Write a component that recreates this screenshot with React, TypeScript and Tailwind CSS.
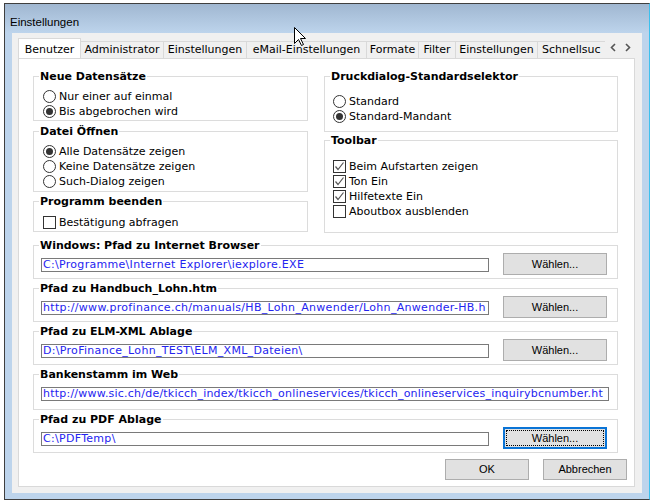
import React from 'react';

// --- kleine Bausteine ---
const Group: React.FC<{ title: string; className: string; children?: React.ReactNode }> = ({ title, className, children }) => (
  <div className={`border border-[#dcdcdc] ${className}`}>
    <div className="-mt-[7px] ml-[5px] w-fit px-px bg-white font-bold leading-[13px]">{title}</div>
    {children}
  </div>
);

const Radio: React.FC<{ checked?: boolean; label: string }> = ({ checked, label }) => (
  <div className="flex items-center h-[15px]">
    <span className="w-[13px] h-[13px] rounded-full border border-[#333] bg-white flex items-center justify-center">
      {checked && <span className="w-[7px] h-[7px] rounded-full bg-[#333]" />}
    </span>
    <span className="ml-[3px] leading-[15px]">{label}</span>
  </div>
);

const Check: React.FC<{ checked?: boolean; label: string }> = ({ checked, label }) => (
  <div className="flex items-center h-[15px]">
    <span className="w-[13px] h-[13px] border border-[#333] bg-white flex items-center justify-center">
      {checked && (
        <svg width="11" height="11" viewBox="0 0 11 11">
          <path d="M1.5 5.5 L4 8.5 L9.5 1.5" fill="none" stroke="#555" strokeWidth="1.2" />
        </svg>
      )}
    </span>
    <span className="ml-[3px] leading-[15px]">{label}</span>
  </div>
);

const Btn: React.FC<{ label: string; className: string }> = ({ label, className }) => (
  <div className={`bg-[#e1e1e1] border border-[#adadad] flex items-center justify-center font-['Liberation_Sans',sans-serif] text-[11px] ${className}`}>
    {label}
  </div>
);

const PathBox: React.FC<{ title: string; value: string; h: string; wide?: boolean; focused?: boolean; className?: string }> = ({ title, value, h, wide, focused, className = '' }) => (
  <Group title={title} className={`${h} ${className}`}>
    <div className="flex items-start">
      <div className={`ml-[7px] mt-[6px] h-[14px] border border-[#7a7a7a] overflow-hidden whitespace-nowrap pl-px leading-[12px] text-[#2424f0] ${wide ? 'w-[568px] tracking-[0.22px]' : 'w-[448px] tracking-[0.3px]'}`}>
        {value}
      </div>
      {!wide && (focused ? (
        <div className="ml-[14px] mt-[1px] w-[104px] h-[22px] bg-[#e1e1e1] border-2 border-[#0a74d6] p-px flex">
          <div className="flex-1 border border-dotted border-black flex items-center justify-center font-['Liberation_Sans',sans-serif] text-[11px]">Wählen...</div>
        </div>
      ) : (
        <Btn label="Wählen..." className="ml-[14px] mt-[1px] w-[104px] h-[22px]" />
      ))}
    </div>
  </Group>
);

const tabs: { label: string; w: string }[] = [
  { label: 'Administrator', w: 'w-[83px]' },
  { label: 'Einstellungen', w: 'w-[83px]' },
  { label: 'eMail-Einstellungen', w: 'w-[120px]' },
  { label: 'Formate', w: 'w-[52px]' },
  { label: 'Filter', w: 'w-[37px]' },
  { label: 'Einstellungen', w: 'w-[82px]' },
];

export default function App() {
  return (
    <div className="relative w-[656px] h-[504px] bg-white font-['DejaVu_Sans',sans-serif] text-[11px] text-black overflow-hidden">
      {/* Fenster */}
      <div className="ml-[4px] mt-[3px] w-[646px] h-[497px] border-l border-t border-b border-[#3f3f3f] border-r border-r-[#3cc0ee] bg-[#bdd4ec] flex flex-col">
        {/* Titelleiste */}
        <div className="h-[29px] bg-linear-to-b from-[#a0b7d1] to-[#bdd4ec] pl-[5px] pt-[11px] leading-[14px] font-['Liberation_Sans',sans-serif] text-[11.5px]">
          Einstellungen
        </div>

        {/* Client */}
        <div className="mx-[7px] w-[630px] h-[460px] bg-[#f0f0f0] pl-[6px] pt-[5px]">
          {/* Reiter */}
          <div className="flex w-[617px] h-[20px] items-end">
            <div className="flex-1 flex items-end h-[20px] overflow-hidden">
              <div className="relative z-10 -mb-px shrink-0 w-[63px] h-[21px] bg-white border border-b-0 border-[#d9d9d9] flex items-center justify-center pt-[2px]">
                Benutzer
              </div>
              {tabs.map((t, i) => (
                <div key={i} className={`shrink-0 ${t.w} h-[17px] bg-[#f0f0f0] border-t border-r border-[#d9d9d9] flex items-center justify-center pt-px whitespace-nowrap`}>
                  {t.label}
                </div>
              ))}
              <div className="shrink-0 w-[67px] h-[17px] bg-[#f0f0f0] border-t border-[#d9d9d9] flex items-center pl-[4px] pt-px whitespace-nowrap">
                Schnellsuc
              </div>
            </div>
            <div className="w-[30px] h-[20px] flex items-center justify-center gap-[9px] pb-[2px]">
              <svg width="6" height="9" viewBox="0 0 6 9"><path d="M5 1 L1.5 4.5 L5 8" fill="none" stroke="#555" strokeWidth="1.6" /></svg>
              <svg width="6" height="9" viewBox="0 0 6 9"><path d="M1 1 L4.5 4.5 L1 8" fill="none" stroke="#555" strokeWidth="1.6" /></svg>
            </div>
          </div>

          {/* Seite */}
          <div className="w-[617px] h-[429px] border border-[#d9d9d9] bg-white pl-[14px] pr-[16px] pt-[17px]">
            <div className="flex gap-[16px]">
              <div className="w-[275px] flex flex-col">
                <Group title="Neue Datensätze" className="h-[45px]">
                  <div className="mt-[6px] ml-[9px]">
                    <Radio label="Nur einer auf einmal" />
                    <Radio checked label="Bis abgebrochen wird" />
                  </div>
                </Group>
                <Group title="Datei Öffnen" className="mt-[10px] h-[61px]">
                  <div className="mt-[6px] ml-[9px]">
                    <Radio checked label="Alle Datensätze zeigen" />
                    <Radio label="Keine Datensätze zeigen" />
                    <Radio label="Such-Dialog zeigen" />
                  </div>
                </Group>
                <Group title="Programm beenden" className="mt-[9px] h-[31px]">
                  <div className="mt-[7px] ml-[9px]">
                    <Check label="Bestätigung abfragen" />
                  </div>
                </Group>
              </div>
              <div className="w-[294px] flex flex-col">
                <Group title="Druckdialog-Standardselektor" className="h-[56px]">
                  <div className="mt-[11px] ml-[8px]">
                    <Radio label="Standard" />
                    <Radio checked label="Standard-Mandant" />
                  </div>
                </Group>
                <Group title="Toolbar" className="mt-[8px] h-[93px]">
                  <div className="mt-[12px] ml-[8px]">
                    <Check checked label="Beim Aufstarten zeigen" />
                    <Check checked label="Ton Ein" />
                    <Check checked label="Hilfetexte Ein" />
                    <Check label="Aboutbox ausblenden" />
                  </div>
                </Group>
              </div>
            </div>

            <PathBox className="mt-[12px]" h="h-[34px]" title="Windows: Pfad zu Internet Browser" value="C:\Programme\Internet Explorer\iexplore.EXE" />
            <PathBox className="mt-[9px]" h="h-[34px]" title="Pfad zu Handbuch_Lohn.htm" value="http://www.profinance.ch/manuals/HB_Lohn_Anwender/Lohn_Anwender-HB.h" />
            <PathBox className="mt-[9px]" h="h-[34px]" title="Pfad zu ELM-XML Ablage" value="D:\ProFinance_Lohn_TEST\ELM_XML_Dateien\" />
            <PathBox className="mt-[9px]" h="h-[36px]" wide title="Bankenstamm im Web" value="http://www.sic.ch/de/tkicch_index/tkicch_onlineservices/tkicch_onlineservices_inquirybcnumber.ht" />
            <PathBox className="mt-[9px]" h="h-[34px]" focused title="Pfad zu PDF Ablage" value="C:\PDFTemp\" />

            <div className="mt-[6px] -mr-[9px] flex justify-end gap-[14px]">
              <Btn label="OK" className="w-[84px] h-[21px]" />
              <Btn label="Abbrechen" className="w-[84px] h-[21px]" />
            </div>
          </div>
        </div>
      </div>

      {/* Mauszeiger */}
      <svg className="absolute left-[294px] top-[27px]" width="13" height="20" viewBox="0 0 13 20">
        <path d="M0.5 0.5 L0.5 16.5 L4.5 12.5 L7.5 18.5 L9.5 17.5 L6.5 11.5 L11.5 11.5 Z" fill="white" stroke="black" strokeWidth="1" />
      </svg>
    </div>
  );
}
